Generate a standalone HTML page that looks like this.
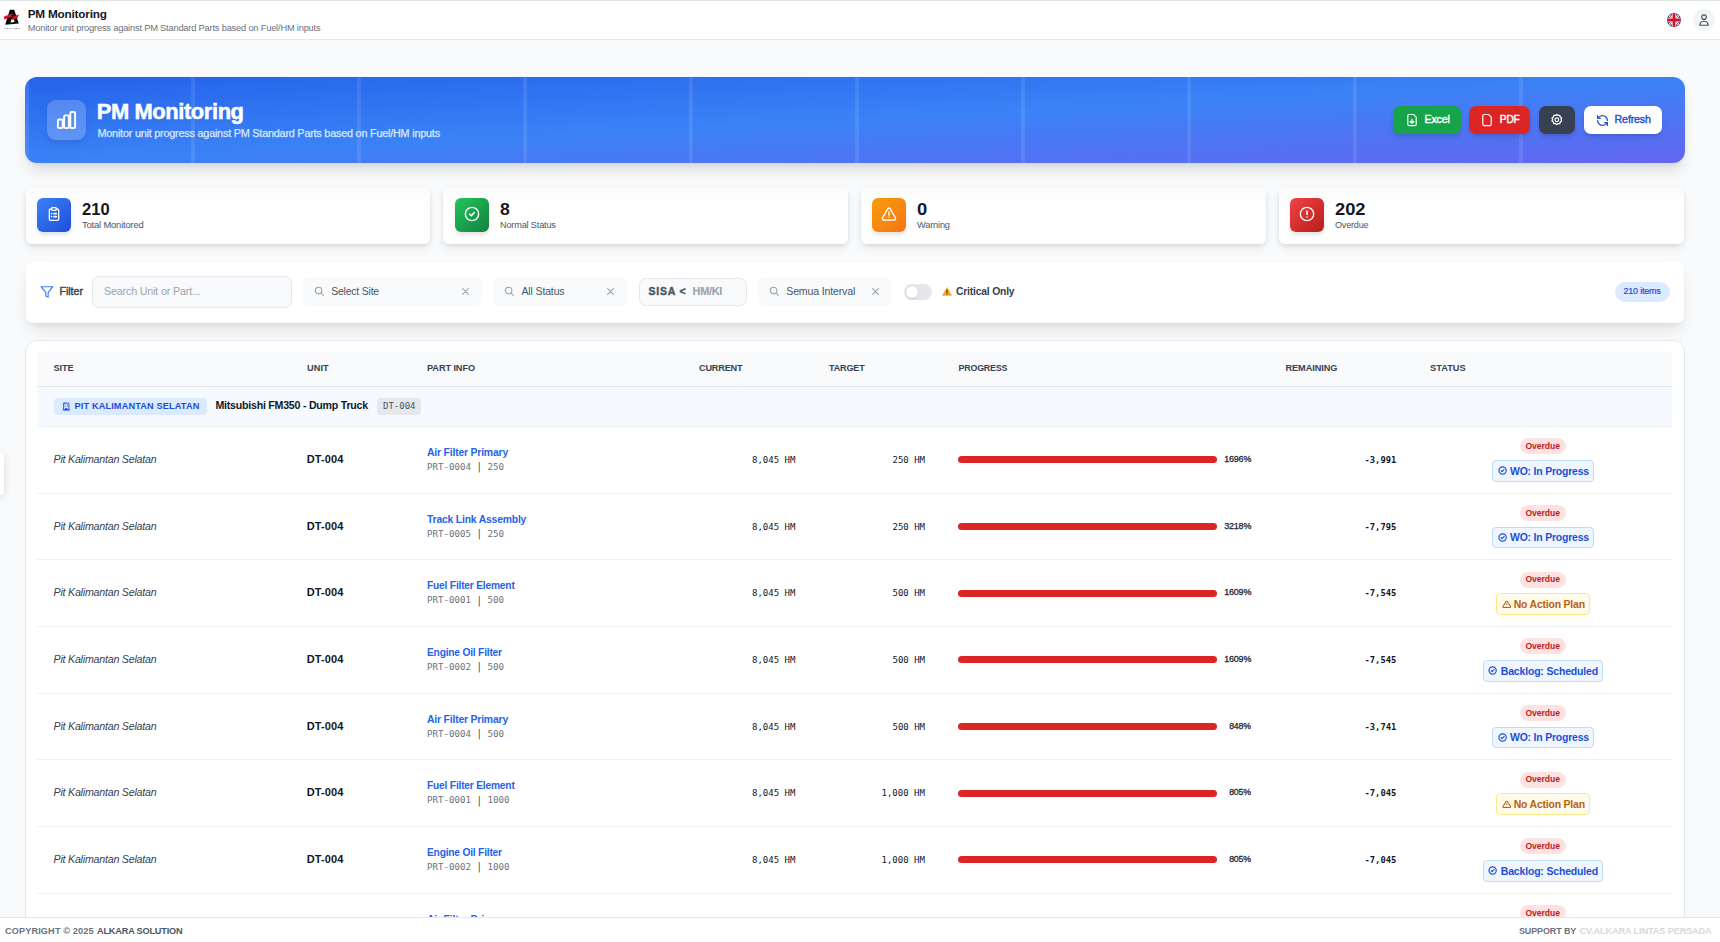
<!DOCTYPE html>
<html lang="en"><head><meta charset="utf-8"><title>PM Monitoring</title>
<style>
html,body{margin:0;padding:0}
body{width:1720px;height:942px;overflow:hidden;position:relative;background:#f9fafb;font-family:"Liberation Sans", sans-serif;}
.b{position:absolute;display:block;box-sizing:border-box}
.t{position:absolute;white-space:pre;display:block}
</style></head><body>
<div class="b" style="left:0px;top:0px;width:1720px;height:40px;background:#fff;border-bottom:1px solid #e5e7eb;"></div>
<div class="b" style="left:0px;top:0px;width:1720px;height:1px;background:#dde8e3;"></div>
<svg class="b" style="left:3px;top:8px" width="19" height="23" viewBox="0 0 19 23">
<polygon points="6.8,1.8 11.2,1.8 15.8,15.6 2.2,16.8" fill="#0a0a0a"/>
<polygon points="8.6,11.300 10.6,11.100 11.700,14.000 7.400,14.400" fill="#fff"/>
<polygon points="1.2,8.500 9.6,5.300 8.8,8.800 1.0,11.500" fill="#d90d1e"/>
<polygon points="9.6,9.0 15.9,6.200 14.6,9.800 8.9,12.0" fill="#d90d1e"/>
<text x="1.1" y="20.700" font-family="Liberation Sans, sans-serif" font-size="2.500" font-weight="700" letter-spacing="1.050" fill="#000">ALKARA</text>
</svg>
<span class="t" style="top:8px;font:700 11.76px/1 'Liberation Sans', sans-serif;color:#111827;letter-spacing:-0.200px;left:27.70px;">PM Monitoring</span>
<span class="t" style="top:24px;font:400 9.29px/1 'Liberation Sans', sans-serif;color:#6b7280;letter-spacing:-0.193px;left:27.70px;">Monitor unit progress against PM Standard Parts based on Fuel/HM inputs</span>
<svg class="b" style="left:1667px;top:13px" width="14" height="14" viewBox="0 0 14 14">
<defs><clipPath id="fc"><circle cx="7" cy="7" r="7"/></clipPath></defs>
<g clip-path="url(#fc)"><rect width="14" height="14" fill="#15286e"/>
<path d="M0 0L14 14M14 0L0 14" stroke="#fff" stroke-width="2.2"/>
<path d="M0 0L14 14M14 0L0 14" stroke="#d0122d" stroke-width=".8"/>
<path d="M7 0V14M0 7H14" stroke="#fff" stroke-width="4.6"/>
<path d="M7 0V14M0 7H14" stroke="#d0122d" stroke-width="2.8"/></g></svg>
<div class="b" style="left:1693px;top:9px;width:22px;height:22px;border-radius:50%;background:#f3f4f6;"></div>
<svg class="b" style="left:1698px;top:14px" width="12" height="12" viewBox="0 0 24 24" fill="none" stroke="#4b5563" stroke-width="2.4" stroke-linecap="round" stroke-linejoin="round"><circle cx="12" cy="6.200" r="4.600"/><path d="M3.500 22.500c.6-5.200 3.600-8 8.500-8s7.900 2.800 8.500 8z"/></svg>
<div class="b" style="left:25px;top:77px;width:1660px;height:86px;border-radius:12px;background:linear-gradient(90deg,rgba(255,255,255,.095),rgba(255,255,255,.095)) 0px 0/4px 100% no-repeat,linear-gradient(90deg,rgba(255,255,255,.095),rgba(255,255,255,.095)) 166px 0/4px 100% no-repeat,linear-gradient(90deg,rgba(255,255,255,.095),rgba(255,255,255,.095)) 332px 0/4px 100% no-repeat,linear-gradient(90deg,rgba(255,255,255,.095),rgba(255,255,255,.095)) 498px 0/4px 100% no-repeat,linear-gradient(90deg,rgba(255,255,255,.095),rgba(255,255,255,.095)) 664px 0/4px 100% no-repeat,linear-gradient(90deg,rgba(255,255,255,.095),rgba(255,255,255,.095)) 830px 0/4px 100% no-repeat,linear-gradient(90deg,rgba(255,255,255,.095),rgba(255,255,255,.095)) 996px 0/4px 100% no-repeat,linear-gradient(90deg,rgba(255,255,255,.095),rgba(255,255,255,.095)) 1162px 0/4px 100% no-repeat,linear-gradient(90deg,rgba(255,255,255,.095),rgba(255,255,255,.095)) 1328px 0/4px 100% no-repeat,linear-gradient(90deg,rgba(255,255,255,.095),rgba(255,255,255,.095)) 1494px 0/4px 100% no-repeat,linear-gradient(to bottom right,#2563eb,#3b82f6,#6366f1);box-shadow:0 10px 15px -3px rgba(0,0,0,.12),0 4px 6px -4px rgba(0,0,0,.1);overflow:hidden;"></div>
<div class="b" style="left:47px;top:100px;width:38.6px;height:40px;border-radius:9px;background:rgba(255,255,255,.2);box-shadow:0 4px 6px -1px rgba(0,0,0,.1);"></div>
<svg class="b" style="left:50px;top:105px" width="34" height="30" viewBox="0 0 34 30" fill="none" stroke="#fff" stroke-width="1.9" stroke-linejoin="round"><rect x="7.9" y="14.45" width="4.8" height="8.6" rx="1.3"/><rect x="14.1" y="10.35" width="4.8" height="12.7" rx="1.3"/><rect x="20.3" y="6.95" width="4.8" height="16.1" rx="1.3"/></svg>
<span class="t" style="top:101px;font:700 21.9px/1 'Liberation Sans', sans-serif;color:#fff;letter-spacing:-0.400px;left:96.80px;-webkit-text-stroke:.5px #fff;">PM Monitoring</span>
<span class="t" style="top:128px;font:400 10.85px/1 'Liberation Sans', sans-serif;color:#dbeafe;letter-spacing:-0.221px;left:97.50px;-webkit-text-stroke:.25px #dbeafe;">Monitor unit progress against PM Standard Parts based on Fuel/HM inputs</span>
<div class="b" style="left:1393px;top:106px;width:68px;height:28px;border-radius:7px;background:#16a34a;box-shadow:0 4px 6px -1px rgba(0,0,0,.12),0 2px 4px -2px rgba(0,0,0,.1);"></div>
<svg class="b" style="left:1405px;top:113px" width="14" height="14" viewBox="0 0 24 24" fill="none" stroke="#fff" stroke-width="2" stroke-linecap="round" stroke-linejoin="round"><path d="M14.500 2.500H7a2.200 2.200 0 0 0-2.200 2.200v14.600A2.200 2.200 0 0 0 7 21.500h10a2.200 2.200 0 0 0 2.200-2.200V7.200z"/><path d="M12 11v6.500M8.800 14.500l3.200 3.200 3.200-3.200" stroke-width="2.400"/></svg>
<span class="t" style="top:114px;font:400 10.7px/1 'Liberation Sans', sans-serif;color:#fff;letter-spacing:-0.175px;left:1424.50px;-webkit-text-stroke:.42px #fff;">Excel</span>
<div class="b" style="left:1469px;top:106px;width:61px;height:28px;border-radius:7px;background:#dc2626;box-shadow:0 4px 6px -1px rgba(0,0,0,.12),0 2px 4px -2px rgba(0,0,0,.1);"></div>
<svg class="b" style="left:1480px;top:113px" width="14" height="14" viewBox="0 0 24 24" fill="none" stroke="#fff" stroke-width="2" stroke-linecap="round" stroke-linejoin="round"><path d="M14.500 2.500H7a2.200 2.200 0 0 0-2.200 2.200v14.600A2.200 2.200 0 0 0 7 21.500h10a2.200 2.200 0 0 0 2.200-2.200V7.200z"/></svg>
<span class="t" style="top:115px;font:400 10.1px/1 'Liberation Sans', sans-serif;color:#fff;letter-spacing:-0.150px;left:1499.80px;-webkit-text-stroke:.42px #fff;">PDF</span>
<div class="b" style="left:1539px;top:106px;width:36px;height:28px;border-radius:7px;background:#374151;box-shadow:0 4px 6px -1px rgba(0,0,0,.12),0 2px 4px -2px rgba(0,0,0,.1);"></div>
<svg class="b" style="left:1550.200px;top:113.200px" width="13.600" height="13.600" viewBox="0 0 24 24" fill="none" stroke="#fff" stroke-width="2.200" stroke-linecap="round" stroke-linejoin="round"><path d="M12 2.500l2.300 1.900 3-.2.700 2.900 2.500 1.600-1.100 2.800 1.100 2.800-2.500 1.600-.7 2.900-3-.2-2.300 1.900-2.300-1.900-3 .2-.7-2.900L3.500 14.300l1.100-2.800L3.500 8.700 6 7.100l.7-2.900 3 .2z"/><circle cx="12" cy="12" r="3.200"/></svg>
<div class="b" style="left:1584px;top:106px;width:78px;height:28px;border-radius:7px;background:#fff;box-shadow:0 4px 6px -1px rgba(0,0,0,.12),0 2px 4px -2px rgba(0,0,0,.1);"></div>
<svg class="b" style="left:1595.500px;top:113.500px" width="13" height="13" viewBox="0 0 24 24" fill="none" stroke="#1d4ed8" stroke-width="2.300" stroke-linecap="round" stroke-linejoin="round"><path d="M21 12a9 9 0 0 0-9-9 9.750 9.750 0 0 0-6.740 2.740L3 8"/><path d="M3 3v5h5"/><path d="M3 12a9 9 0 0 0 9 9 9.750 9.750 0 0 0 6.740-2.740L21 16"/><path d="M16 16h5v5"/></svg>
<span class="t" style="top:114px;font:400 10.61px/1 'Liberation Sans', sans-serif;color:#1d4ed8;letter-spacing:-0.133px;left:1614.60px;-webkit-text-stroke:.4px #1d4ed8;">Refresh</span>
<div class="b" style="left:25.60px;top:187px;width:404.50px;height:56.5px;border-radius:6px;background:linear-gradient(#fbfbfb,#fff 40%);box-shadow:0 4px 8px -1px rgba(0,0,0,.1),0 2px 5px -1px rgba(0,0,0,.07),0 0 0 .5px rgba(0,0,0,.02);"></div>
<div class="b" style="left:37px;top:198px;width:34px;height:34px;border-radius:6px;background:linear-gradient(135deg,#3b82f6,#1d4ed8);box-shadow:0 3px 5px -1px rgba(0,0,0,.15);"></div>
<svg class="b" style="left:46px;top:206.4px" width="16" height="16" viewBox="0 0 24 24" fill="none" stroke="#fff" stroke-width="2" stroke-linecap="round" stroke-linejoin="round"><rect x="8.500" y="2.500" width="7" height="4" rx="1.200"/><path d="M15.500 4.500H17a2 2 0 0 1 2 2v13a2 2 0 0 1-2 2H7a2 2 0 0 1-2-2v-13a2 2 0 0 1 2-2h1.500"/><path d="M12 11.500h3.500M12 16h3.500M8.500 11.500h.01M8.500 16h.01" stroke-width="2.400"/></svg>
<span class="t" style="top:202px;font:700 16.54px/1 'Liberation Sans', sans-serif;color:#111827;left:82.00px;transform:scaleX(1.000);transform-origin:0px 50%;">210</span>
<span class="t" style="top:220px;font:400 9.45px/1 'Liberation Sans', sans-serif;color:#4b5563;letter-spacing:-0.196px;left:82.00px;">Total Monitored</span>
<div class="b" style="left:442.60px;top:187px;width:405.40px;height:56.5px;border-radius:6px;background:linear-gradient(#fbfbfb,#fff 40%);box-shadow:0 4px 8px -1px rgba(0,0,0,.1),0 2px 5px -1px rgba(0,0,0,.07),0 0 0 .5px rgba(0,0,0,.02);"></div>
<div class="b" style="left:455px;top:198px;width:34px;height:34px;border-radius:6px;background:linear-gradient(135deg,#22c55e,#15803d);box-shadow:0 3px 5px -1px rgba(0,0,0,.15);"></div>
<svg class="b" style="left:464px;top:206.4px" width="16" height="16" viewBox="0 0 24 24" fill="none" stroke="#fff" stroke-width="2" stroke-linecap="round" stroke-linejoin="round"><circle cx="12" cy="12" r="10"/><path d="m8.500 12.300 2.400 2.400 4.600-4.900" stroke-width="2.400"/></svg>
<span class="t" style="top:202px;font:700 16.54px/1 'Liberation Sans', sans-serif;color:#111827;left:500.00px;transform:scaleX(1.067);transform-origin:0px 50%;">8</span>
<span class="t" style="top:221px;font:400 9.12px/1 'Liberation Sans', sans-serif;color:#4b5563;letter-spacing:-0.150px;left:500.00px;">Normal Status</span>
<div class="b" style="left:861.00px;top:187px;width:405.00px;height:56.5px;border-radius:6px;background:linear-gradient(#fbfbfb,#fff 40%);box-shadow:0 4px 8px -1px rgba(0,0,0,.1),0 2px 5px -1px rgba(0,0,0,.07),0 0 0 .5px rgba(0,0,0,.02);"></div>
<div class="b" style="left:872px;top:198px;width:34px;height:34px;border-radius:6px;background:linear-gradient(135deg,#f59e0b,#f97316);box-shadow:0 3px 5px -1px rgba(0,0,0,.15);"></div>
<svg class="b" style="left:881px;top:206.4px" width="16" height="16" viewBox="0 0 24 24" fill="none" stroke="#fff" stroke-width="2" stroke-linecap="round" stroke-linejoin="round"><path d="m21.700 18-8-14a2 2 0 0 0-3.500 0l-8 14A2 2 0 0 0 4 21h16a2 2 0 0 0 1.700-3"/><path d="M12 9v4.500M12 17h.01" stroke-width="2.300"/></svg>
<span class="t" style="top:202px;font:700 16.54px/1 'Liberation Sans', sans-serif;color:#111827;left:917.00px;transform:scaleX(1.111);transform-origin:0px 50%;">0</span>
<span class="t" style="top:221px;font:400 9.22px/1 'Liberation Sans', sans-serif;color:#4b5563;letter-spacing:-0.167px;left:917.00px;">Warning</span>
<div class="b" style="left:1279.00px;top:187px;width:405.40px;height:56.5px;border-radius:6px;background:linear-gradient(#fbfbfb,#fff 40%);box-shadow:0 4px 8px -1px rgba(0,0,0,.1),0 2px 5px -1px rgba(0,0,0,.07),0 0 0 .5px rgba(0,0,0,.02);"></div>
<div class="b" style="left:1290px;top:198px;width:34px;height:34px;border-radius:6px;background:linear-gradient(135deg,#ef4444,#b91c1c);box-shadow:0 3px 5px -1px rgba(0,0,0,.15);"></div>
<svg class="b" style="left:1299px;top:206.4px" width="16" height="16" viewBox="0 0 24 24" fill="none" stroke="#fff" stroke-width="2" stroke-linecap="round" stroke-linejoin="round"><circle cx="12" cy="12" r="10"/><path d="M12 7.500v5M12 16.500h.01" stroke-width="2.400"/></svg>
<span class="t" style="top:202px;font:700 16.54px/1 'Liberation Sans', sans-serif;color:#111827;left:1335.00px;transform:scaleX(1.107);transform-origin:0px 50%;">202</span>
<span class="t" style="top:221px;font:400 8.99px/1 'Liberation Sans', sans-serif;color:#4b5563;letter-spacing:-0.167px;left:1335.00px;">Overdue</span>
<div class="b" style="left:25.6px;top:262px;width:1658.8px;height:60.5px;border-radius:7px;background:#fff;box-shadow:0 10px 18px -4px rgba(0,0,0,.10),0 4px 7px -3px rgba(0,0,0,.08);"></div>
<svg class="b" style="left:40.200px;top:285.200px" width="14" height="14" viewBox="0 0 24 24" fill="none" stroke="#3b82f6" stroke-width="2" stroke-linecap="round" stroke-linejoin="round"><path d="M22 3H2l8 9.460V19l4 2v-8.540z"/></svg>
<span class="t" style="top:286px;font:400 10.76px/1 'Liberation Sans', sans-serif;color:#374151;letter-spacing:-0.080px;left:59.50px;-webkit-text-stroke:.4px #374151;">Filter</span>
<div class="b" style="left:92px;top:276px;width:200px;height:31.5px;border-radius:7px;background:#f9fafb;border:1px solid #e5e7eb;"></div>
<span class="t" style="top:286px;font:400 10.78px/1 'Liberation Sans', sans-serif;color:#9ca3af;letter-spacing:-0.190px;left:104.00px;">Search Unit or Part...</span>
<div class="b" style="left:303px;top:277.2px;width:179px;height:29.2px;border-radius:7px;background:#f9fafb;"></div>
<svg class="b" style="left:313.5px;top:285.800px" width="10.500" height="10.500" viewBox="0 0 24 24" fill="none" stroke="#9ca3af" stroke-width="2.400" stroke-linecap="round"><circle cx="10.500" cy="10.500" r="7.500"/><path d="m21.500 21.500-5.400-5.400"/></svg>
<span class="t" style="top:287px;font:400 10.45px/1 'Liberation Sans', sans-serif;color:#4b5563;letter-spacing:-0.200px;left:331.25px;">Select Site</span>
<svg class="b" style="left:462.3px;top:288px" width="7" height="7" viewBox="0 0 7 7" stroke="#9ca3af" stroke-width="1.100" stroke-linecap="round"><path d="M.6.6l5.800 5.800M6.400.6L.6 6.400"/></svg>
<div class="b" style="left:493px;top:277.2px;width:135px;height:29.2px;border-radius:7px;background:#f9fafb;"></div>
<svg class="b" style="left:503.5px;top:285.800px" width="10.500" height="10.500" viewBox="0 0 24 24" fill="none" stroke="#9ca3af" stroke-width="2.400" stroke-linecap="round"><circle cx="10.500" cy="10.500" r="7.500"/><path d="m21.500 21.500-5.400-5.400"/></svg>
<span class="t" style="top:286px;font:400 10.5px/1 'Liberation Sans', sans-serif;color:#4b5563;letter-spacing:-0.139px;left:521.50px;">All Status</span>
<svg class="b" style="left:607.3px;top:288px" width="7" height="7" viewBox="0 0 7 7" stroke="#9ca3af" stroke-width="1.100" stroke-linecap="round"><path d="M.6.6l5.800 5.800M6.400.6L.6 6.400"/></svg>
<div class="b" style="left:639px;top:278.25px;width:107.75px;height:27.25px;border-radius:7px;background:#f9fafb;border:1px solid #e5e7eb;"></div>
<span class="t" style="top:286px;font:700 10.5px/1 'Liberation Sans', sans-serif;color:#4b5563;letter-spacing:0.800px;left:648.50px;-webkit-text-stroke:.4px #4b5563;">SISA &lt;</span>
<span class="t" style="top:286px;font:700 10.91px/1 'Liberation Sans', sans-serif;color:#9ca3af;letter-spacing:-0.250px;left:692.50px;-webkit-text-stroke:.15px #9ca3af;">HM/KI</span>
<div class="b" style="left:758px;top:277.2px;width:134px;height:29.2px;border-radius:7px;background:#f9fafb;"></div>
<svg class="b" style="left:768.7px;top:285.800px" width="10.500" height="10.500" viewBox="0 0 24 24" fill="none" stroke="#9ca3af" stroke-width="2.400" stroke-linecap="round"><circle cx="10.500" cy="10.500" r="7.500"/><path d="m21.500 21.500-5.400-5.400"/></svg>
<span class="t" style="top:286px;font:400 10.6px/1 'Liberation Sans', sans-serif;color:#4b5563;letter-spacing:-0.173px;left:786.25px;">Semua Interval</span>
<svg class="b" style="left:872.3px;top:288px" width="7" height="7" viewBox="0 0 7 7" stroke="#9ca3af" stroke-width="1.100" stroke-linecap="round"><path d="M.6.6l5.800 5.800M6.400.6L.6 6.400"/></svg>
<div class="b" style="left:904px;top:284px;width:28px;height:15.75px;border-radius:8px;background:#e5e7eb;"></div>
<div class="b" style="left:905.75px;top:285.6px;width:12.5px;height:12.5px;border-radius:50%;background:#fff;box-shadow:0 0 0 .6px #d1d5db,0 1px 2px rgba(0,0,0,.15);"></div>
<svg class="b" style="left:941.500px;top:287.300px" width="10" height="9" viewBox="0 0 11 10"><path d="M5.500.700 10.400 9.200H.6z" fill="#f7a823" stroke="#f7a823" stroke-width=".9" stroke-linejoin="round"/><path d="M5.500 3.300v3.200" stroke="#3b2a10" stroke-width="1.100" stroke-linecap="round"/><circle cx="5.500" cy="8" r=".65" fill="#3b2a10"/></svg>
<span class="t" style="top:287px;font:700 10.38px/1 'Liberation Sans', sans-serif;color:#374151;letter-spacing:-0.208px;left:956.00px;">Critical Only</span>
<div class="b" style="left:1615px;top:282px;width:55px;height:19.5px;border-radius:10px;background:#dbeafe;"></div><span class="t" style="top:287px;font:400 8.95px/1 'Liberation Sans', sans-serif;color:#1d4ed8;letter-spacing:-0.188px;left:1623.50px;-webkit-text-stroke:.2px #1d4ed8;">210 items</span>
<div class="b" style="left:25px;top:340px;width:1660px;height:620px;border-radius:12px;background:#fff;border:1px solid #e2e8f0;box-shadow:0 1px 2px rgba(0,0,0,.04);box-sizing:border-box;"></div>
<div class="b" style="left:37px;top:352px;width:1635px;height:35px;background:#f8fafc;border-bottom:1px solid #e3e6eb;"></div>
<span class="t" style="top:364px;font:700 9.19px/1 'Liberation Sans', sans-serif;color:#374151;letter-spacing:-0.067px;left:53.50px;">SITE</span>
<span class="t" style="top:364px;font:700 9.19px/1 'Liberation Sans', sans-serif;color:#374151;letter-spacing:0.100px;left:307.00px;">UNIT</span>
<span class="t" style="top:364px;font:700 9.19px/1 'Liberation Sans', sans-serif;color:#374151;letter-spacing:-0.088px;left:427.00px;">PART INFO</span>
<span class="t" style="top:364px;font:700 9.19px/1 'Liberation Sans', sans-serif;color:#374151;letter-spacing:-0.200px;left:699.00px;">CURRENT</span>
<span class="t" style="top:364px;font:700 9.0px/1 'Liberation Sans', sans-serif;color:#374151;letter-spacing:-0.140px;left:829.00px;">TARGET</span>
<span class="t" style="top:364px;font:700 8.85px/1 'Liberation Sans', sans-serif;color:#374151;letter-spacing:-0.171px;left:958.50px;">PROGRESS</span>
<span class="t" style="top:364px;font:700 9.19px/1 'Liberation Sans', sans-serif;color:#374151;letter-spacing:-0.062px;left:1285.50px;">REMAINING</span>
<span class="t" style="top:364px;font:700 9.19px/1 'Liberation Sans', sans-serif;color:#374151;letter-spacing:0.060px;left:1430.00px;">STATUS</span>
<div class="b" style="left:37px;top:387px;width:1635px;height:40px;background:#f6f9fe;border-bottom:1px solid #eff2f7;"></div>
<div class="b" style="left:54px;top:398px;width:152.5px;height:16.5px;border-radius:4px;background:#dbeafe;"></div>
<svg class="b" style="left:61.500px;top:402px" width="8.500" height="9" viewBox="0 0 24 24" fill="none" stroke="#1d4ed8" stroke-width="2.600" stroke-linecap="round" stroke-linejoin="round"><rect x="4.500" y="2.500" width="15" height="19" rx="1.500"/><path d="M9.500 21.500v-4h5v4M9 7h.01M15 7h.01M9 11.500h.01M15 11.500h.01M2.500 21.500h19"/></svg>
<span class="t" style="top:402px;font:700 9.19px/1 'Liberation Sans', sans-serif;color:#1d4ed8;letter-spacing:0.143px;left:74.50px;">PIT KALIMANTAN SELATAN</span>
<span class="t" style="top:400px;font:700 10.61px/1 'Liberation Sans', sans-serif;color:#111827;letter-spacing:-0.232px;left:215.50px;">Mitsubishi FM350 - Dump Truck</span>
<div class="b" style="left:377px;top:398px;width:43.75px;height:17px;border-radius:4px;background:#e5e7eb;"></div>
<span class="t" style="top:402px;font:400 9px/1 'DejaVu Sans Mono', 'Liberation Mono', monospace;color:#4b5563;left:383.00px;">DT-004</span>
<span class="t" style="top:454px;font:italic 400 10.65px/1 'Liberation Sans', sans-serif;color:#374151;letter-spacing:-0.214px;left:53.50px;">Pit Kalimantan Selatan</span>
<span class="t" style="top:454px;font:700 11.03px/1 'Liberation Sans', sans-serif;color:#111827;letter-spacing:0.100px;left:306.75px;">DT-004</span>
<span class="t" style="top:448px;font:700 10.45px/1 'Liberation Sans', sans-serif;color:#2563eb;letter-spacing:-0.206px;left:427.00px;">Air Filter Primary</span>
<span class="t" style="top:463px;font:400 9.13px/1 'DejaVu Sans Mono', 'Liberation Mono', monospace;color:#6b7280;left:427.00px;">PRT-0004</span>
<span class="t" style="top:462px;font:400 10px/1 'DejaVu Sans Mono', 'Liberation Mono', monospace;color:#4b5563;left:476.20px;">|</span>
<span class="t" style="top:463px;font:400 9.13px/1 'DejaVu Sans Mono', 'Liberation Mono', monospace;color:#6b7280;left:487.50px;">250</span>
<span class="t" style="top:456px;font:400 9px/1 'DejaVu Sans Mono', 'Liberation Mono', monospace;color:#111827;left:752.00px;">8,045 HM</span>
<span class="t" style="top:456px;font:400 9px/1 'DejaVu Sans Mono', 'Liberation Mono', monospace;color:#111827;left:892.50px;">250 HM</span>
<div class="b" style="left:958px;top:456px;width:259px;height:7px;border-radius:4px;background:#dc2626;"></div>
<span class="t" style="top:455px;font:400 8.92px/1 'Liberation Sans', sans-serif;color:#1f2937;letter-spacing:-0.150px;left:1224.20px;-webkit-text-stroke:.3px #1f2937;">1696%</span>
<span class="t" style="top:456px;font:700 8.8px/1 'DejaVu Sans Mono', 'Liberation Mono', monospace;color:#111827;left:1364.50px;">-3,991</span>
<div class="b" style="left:1520px;top:438px;width:46px;height:15.75px;border-radius:8px;background:#fee2e2;"></div>
<span class="t" style="top:442px;font:700 8.62px/1 'Liberation Sans', sans-serif;color:#b91c1c;letter-spacing:-0.083px;left:1525.50px;">Overdue</span>
<div class="b" style="left:1492px;top:460.10px;width:102px;height:21.45px;border-radius:4px;background:#eff6ff;border:1px solid #bfdbfe;box-sizing:border-box;"></div>
<svg class="b" style="left:1497.600px;top:466.30px" width="9.200" height="9.200" viewBox="0 0 24 24" fill="none" stroke="#1d4ed8" stroke-width="3.100" stroke-linecap="round" stroke-linejoin="round"><circle cx="12" cy="12" r="9.500"/><path d="m8.300 12.300 2.500 2.500 4.900-5.100"/></svg>
<span class="t" style="top:467px;font:700 10.45px/1 'Liberation Sans', sans-serif;color:#1d4ed8;letter-spacing:-0.193px;left:1510.00px;">WO: In Progress</span>
<div class="b" style="left:37px;top:493px;width:1635px;height:1px;background:#eff1f4;"></div>
<span class="t" style="top:521px;font:italic 400 10.65px/1 'Liberation Sans', sans-serif;color:#374151;letter-spacing:-0.214px;left:53.50px;">Pit Kalimantan Selatan</span>
<span class="t" style="top:521px;font:700 11.03px/1 'Liberation Sans', sans-serif;color:#111827;letter-spacing:0.100px;left:306.75px;">DT-004</span>
<span class="t" style="top:515px;font:700 10.38px/1 'Liberation Sans', sans-serif;color:#2563eb;letter-spacing:-0.194px;left:427.00px;">Track Link Assembly</span>
<span class="t" style="top:530px;font:400 9.13px/1 'DejaVu Sans Mono', 'Liberation Mono', monospace;color:#6b7280;left:427.00px;">PRT-0005</span>
<span class="t" style="top:529px;font:400 10px/1 'DejaVu Sans Mono', 'Liberation Mono', monospace;color:#4b5563;left:476.20px;">|</span>
<span class="t" style="top:530px;font:400 9.13px/1 'DejaVu Sans Mono', 'Liberation Mono', monospace;color:#6b7280;left:487.50px;">250</span>
<span class="t" style="top:523px;font:400 9px/1 'DejaVu Sans Mono', 'Liberation Mono', monospace;color:#111827;left:752.00px;">8,045 HM</span>
<span class="t" style="top:523px;font:400 9px/1 'DejaVu Sans Mono', 'Liberation Mono', monospace;color:#111827;left:892.50px;">250 HM</span>
<div class="b" style="left:958px;top:523px;width:259px;height:7px;border-radius:4px;background:#dc2626;"></div>
<span class="t" style="top:522px;font:400 8.92px/1 'Liberation Sans', sans-serif;color:#1f2937;letter-spacing:-0.150px;left:1224.20px;-webkit-text-stroke:.3px #1f2937;">3218%</span>
<span class="t" style="top:523px;font:700 8.8px/1 'DejaVu Sans Mono', 'Liberation Mono', monospace;color:#111827;left:1364.50px;">-7,795</span>
<div class="b" style="left:1520px;top:505px;width:46px;height:15.75px;border-radius:8px;background:#fee2e2;"></div>
<span class="t" style="top:509px;font:700 8.62px/1 'Liberation Sans', sans-serif;color:#b91c1c;letter-spacing:-0.083px;left:1525.50px;">Overdue</span>
<div class="b" style="left:1492px;top:526.77px;width:102px;height:21.45px;border-radius:4px;background:#eff6ff;border:1px solid #bfdbfe;box-sizing:border-box;"></div>
<svg class="b" style="left:1497.600px;top:532.97px" width="9.200" height="9.200" viewBox="0 0 24 24" fill="none" stroke="#1d4ed8" stroke-width="3.100" stroke-linecap="round" stroke-linejoin="round"><circle cx="12" cy="12" r="9.500"/><path d="m8.300 12.300 2.500 2.500 4.900-5.100"/></svg>
<span class="t" style="top:533px;font:700 10.45px/1 'Liberation Sans', sans-serif;color:#1d4ed8;letter-spacing:-0.193px;left:1510.00px;">WO: In Progress</span>
<div class="b" style="left:37px;top:559px;width:1635px;height:1px;background:#eff1f4;"></div>
<span class="t" style="top:587px;font:italic 400 10.65px/1 'Liberation Sans', sans-serif;color:#374151;letter-spacing:-0.214px;left:53.50px;">Pit Kalimantan Selatan</span>
<span class="t" style="top:587px;font:700 11.03px/1 'Liberation Sans', sans-serif;color:#111827;letter-spacing:0.100px;left:306.75px;">DT-004</span>
<span class="t" style="top:581px;font:700 10.21px/1 'Liberation Sans', sans-serif;color:#2563eb;letter-spacing:-0.194px;left:427.00px;">Fuel Filter Element</span>
<span class="t" style="top:596px;font:400 9.13px/1 'DejaVu Sans Mono', 'Liberation Mono', monospace;color:#6b7280;left:427.00px;">PRT-0001</span>
<span class="t" style="top:596px;font:400 10px/1 'DejaVu Sans Mono', 'Liberation Mono', monospace;color:#4b5563;left:476.20px;">|</span>
<span class="t" style="top:596px;font:400 9.13px/1 'DejaVu Sans Mono', 'Liberation Mono', monospace;color:#6b7280;left:487.50px;">500</span>
<span class="t" style="top:589px;font:400 9px/1 'DejaVu Sans Mono', 'Liberation Mono', monospace;color:#111827;left:752.00px;">8,045 HM</span>
<span class="t" style="top:589px;font:400 9px/1 'DejaVu Sans Mono', 'Liberation Mono', monospace;color:#111827;left:892.50px;">500 HM</span>
<div class="b" style="left:958px;top:590px;width:259px;height:7px;border-radius:4px;background:#dc2626;"></div>
<span class="t" style="top:588px;font:400 8.92px/1 'Liberation Sans', sans-serif;color:#1f2937;letter-spacing:-0.150px;left:1224.20px;-webkit-text-stroke:.3px #1f2937;">1609%</span>
<span class="t" style="top:589px;font:700 8.8px/1 'DejaVu Sans Mono', 'Liberation Mono', monospace;color:#111827;left:1364.50px;">-7,545</span>
<div class="b" style="left:1520px;top:572px;width:46px;height:15.75px;border-radius:8px;background:#fee2e2;"></div>
<span class="t" style="top:575px;font:700 8.62px/1 'Liberation Sans', sans-serif;color:#b91c1c;letter-spacing:-0.083px;left:1525.50px;">Overdue</span>
<div class="b" style="left:1496px;top:593.43px;width:94px;height:21.45px;border-radius:4px;background:#fffbeb;border:1px solid #fde68a;box-sizing:border-box;"></div>
<svg class="b" style="left:1501.500px;top:599.73px" width="9.500" height="8.600" preserveAspectRatio="none" viewBox="0 0 24 24" fill="none" stroke="#bb5f12" stroke-width="2.600" stroke-linecap="round" stroke-linejoin="round"><path d="m21.500 18-7.800-13.700a2 2 0 0 0-3.400 0L2.500 18a2 2 0 0 0 1.700 3h15.600a2 2 0 0 0 1.700-3"/><path d="M12 9.500v4M12 17.200h.01"/></svg>
<span class="t" style="top:600px;font:700 10.48px/1 'Liberation Sans', sans-serif;color:#bb5f12;letter-spacing:-0.212px;left:1513.75px;">No Action Plan</span>
<div class="b" style="left:37px;top:626px;width:1635px;height:1px;background:#eff1f4;"></div>
<span class="t" style="top:654px;font:italic 400 10.65px/1 'Liberation Sans', sans-serif;color:#374151;letter-spacing:-0.214px;left:53.50px;">Pit Kalimantan Selatan</span>
<span class="t" style="top:654px;font:700 11.03px/1 'Liberation Sans', sans-serif;color:#111827;letter-spacing:0.100px;left:306.75px;">DT-004</span>
<span class="t" style="top:648px;font:700 10.26px/1 'Liberation Sans', sans-serif;color:#2563eb;letter-spacing:-0.219px;left:427.00px;">Engine Oil Filter</span>
<span class="t" style="top:663px;font:400 9.13px/1 'DejaVu Sans Mono', 'Liberation Mono', monospace;color:#6b7280;left:427.00px;">PRT-0002</span>
<span class="t" style="top:662px;font:400 10px/1 'DejaVu Sans Mono', 'Liberation Mono', monospace;color:#4b5563;left:476.20px;">|</span>
<span class="t" style="top:663px;font:400 9.13px/1 'DejaVu Sans Mono', 'Liberation Mono', monospace;color:#6b7280;left:487.50px;">500</span>
<span class="t" style="top:656px;font:400 9px/1 'DejaVu Sans Mono', 'Liberation Mono', monospace;color:#111827;left:752.00px;">8,045 HM</span>
<span class="t" style="top:656px;font:400 9px/1 'DejaVu Sans Mono', 'Liberation Mono', monospace;color:#111827;left:892.50px;">500 HM</span>
<div class="b" style="left:958px;top:656px;width:259px;height:7px;border-radius:4px;background:#dc2626;"></div>
<span class="t" style="top:655px;font:400 8.92px/1 'Liberation Sans', sans-serif;color:#1f2937;letter-spacing:-0.150px;left:1224.20px;-webkit-text-stroke:.3px #1f2937;">1609%</span>
<span class="t" style="top:656px;font:700 8.8px/1 'DejaVu Sans Mono', 'Liberation Mono', monospace;color:#111827;left:1364.50px;">-7,545</span>
<div class="b" style="left:1520px;top:638px;width:46px;height:15.75px;border-radius:8px;background:#fee2e2;"></div>
<span class="t" style="top:642px;font:700 8.62px/1 'Liberation Sans', sans-serif;color:#b91c1c;letter-spacing:-0.083px;left:1525.50px;">Overdue</span>
<div class="b" style="left:1483.25px;top:660.10px;width:119.5px;height:21.45px;border-radius:4px;background:#eff6ff;border:1px solid #bfdbfe;box-sizing:border-box;"></div>
<svg class="b" style="left:1488.400px;top:666.30px" width="9.200" height="9.200" viewBox="0 0 24 24" fill="none" stroke="#1d4ed8" stroke-width="3.100" stroke-linecap="round" stroke-linejoin="round"><circle cx="12" cy="12" r="9.500"/><path d="m8.300 12.300 2.500 2.500 4.900-5.100"/></svg>
<span class="t" style="top:666px;font:700 10.5px/1 'Liberation Sans', sans-serif;color:#1d4ed8;letter-spacing:-0.176px;left:1500.75px;">Backlog: Scheduled</span>
<div class="b" style="left:37px;top:693px;width:1635px;height:1px;background:#eff1f4;"></div>
<span class="t" style="top:721px;font:italic 400 10.65px/1 'Liberation Sans', sans-serif;color:#374151;letter-spacing:-0.214px;left:53.50px;">Pit Kalimantan Selatan</span>
<span class="t" style="top:721px;font:700 11.03px/1 'Liberation Sans', sans-serif;color:#111827;letter-spacing:0.100px;left:306.75px;">DT-004</span>
<span class="t" style="top:715px;font:700 10.45px/1 'Liberation Sans', sans-serif;color:#2563eb;letter-spacing:-0.206px;left:427.00px;">Air Filter Primary</span>
<span class="t" style="top:730px;font:400 9.13px/1 'DejaVu Sans Mono', 'Liberation Mono', monospace;color:#6b7280;left:427.00px;">PRT-0004</span>
<span class="t" style="top:729px;font:400 10px/1 'DejaVu Sans Mono', 'Liberation Mono', monospace;color:#4b5563;left:476.20px;">|</span>
<span class="t" style="top:730px;font:400 9.13px/1 'DejaVu Sans Mono', 'Liberation Mono', monospace;color:#6b7280;left:487.50px;">500</span>
<span class="t" style="top:723px;font:400 9px/1 'DejaVu Sans Mono', 'Liberation Mono', monospace;color:#111827;left:752.00px;">8,045 HM</span>
<span class="t" style="top:723px;font:400 9px/1 'DejaVu Sans Mono', 'Liberation Mono', monospace;color:#111827;left:892.50px;">500 HM</span>
<div class="b" style="left:958px;top:723px;width:259px;height:7px;border-radius:4px;background:#dc2626;"></div>
<span class="t" style="top:722px;font:400 8.73px/1 'Liberation Sans', sans-serif;color:#1f2937;letter-spacing:-0.200px;left:1229.20px;-webkit-text-stroke:.3px #1f2937;">848%</span>
<span class="t" style="top:723px;font:700 8.8px/1 'DejaVu Sans Mono', 'Liberation Mono', monospace;color:#111827;left:1364.50px;">-3,741</span>
<div class="b" style="left:1520px;top:705px;width:46px;height:15.75px;border-radius:8px;background:#fee2e2;"></div>
<span class="t" style="top:709px;font:700 8.62px/1 'Liberation Sans', sans-serif;color:#b91c1c;letter-spacing:-0.083px;left:1525.50px;">Overdue</span>
<div class="b" style="left:1492px;top:726.77px;width:102px;height:21.45px;border-radius:4px;background:#eff6ff;border:1px solid #bfdbfe;box-sizing:border-box;"></div>
<svg class="b" style="left:1497.600px;top:732.97px" width="9.200" height="9.200" viewBox="0 0 24 24" fill="none" stroke="#1d4ed8" stroke-width="3.100" stroke-linecap="round" stroke-linejoin="round"><circle cx="12" cy="12" r="9.500"/><path d="m8.300 12.300 2.500 2.500 4.900-5.100"/></svg>
<span class="t" style="top:733px;font:700 10.45px/1 'Liberation Sans', sans-serif;color:#1d4ed8;letter-spacing:-0.193px;left:1510.00px;">WO: In Progress</span>
<div class="b" style="left:37px;top:759px;width:1635px;height:1px;background:#eff1f4;"></div>
<span class="t" style="top:787px;font:italic 400 10.65px/1 'Liberation Sans', sans-serif;color:#374151;letter-spacing:-0.214px;left:53.50px;">Pit Kalimantan Selatan</span>
<span class="t" style="top:787px;font:700 11.03px/1 'Liberation Sans', sans-serif;color:#111827;letter-spacing:0.100px;left:306.75px;">DT-004</span>
<span class="t" style="top:781px;font:700 10.21px/1 'Liberation Sans', sans-serif;color:#2563eb;letter-spacing:-0.194px;left:427.00px;">Fuel Filter Element</span>
<span class="t" style="top:796px;font:400 9.13px/1 'DejaVu Sans Mono', 'Liberation Mono', monospace;color:#6b7280;left:427.00px;">PRT-0001</span>
<span class="t" style="top:796px;font:400 10px/1 'DejaVu Sans Mono', 'Liberation Mono', monospace;color:#4b5563;left:476.20px;">|</span>
<span class="t" style="top:796px;font:400 9.13px/1 'DejaVu Sans Mono', 'Liberation Mono', monospace;color:#6b7280;left:487.50px;">1000</span>
<span class="t" style="top:789px;font:400 9px/1 'DejaVu Sans Mono', 'Liberation Mono', monospace;color:#111827;left:752.00px;">8,045 HM</span>
<span class="t" style="top:789px;font:400 9px/1 'DejaVu Sans Mono', 'Liberation Mono', monospace;color:#111827;left:881.50px;">1,000 HM</span>
<div class="b" style="left:958px;top:790px;width:259px;height:7px;border-radius:4px;background:#dc2626;"></div>
<span class="t" style="top:788px;font:400 8.73px/1 'Liberation Sans', sans-serif;color:#1f2937;letter-spacing:-0.200px;left:1229.20px;-webkit-text-stroke:.3px #1f2937;">805%</span>
<span class="t" style="top:789px;font:700 8.8px/1 'DejaVu Sans Mono', 'Liberation Mono', monospace;color:#111827;left:1364.50px;">-7,045</span>
<div class="b" style="left:1520px;top:772px;width:46px;height:15.75px;border-radius:8px;background:#fee2e2;"></div>
<span class="t" style="top:775px;font:700 8.62px/1 'Liberation Sans', sans-serif;color:#b91c1c;letter-spacing:-0.083px;left:1525.50px;">Overdue</span>
<div class="b" style="left:1496px;top:793.43px;width:94px;height:21.45px;border-radius:4px;background:#fffbeb;border:1px solid #fde68a;box-sizing:border-box;"></div>
<svg class="b" style="left:1501.500px;top:799.73px" width="9.500" height="8.600" preserveAspectRatio="none" viewBox="0 0 24 24" fill="none" stroke="#bb5f12" stroke-width="2.600" stroke-linecap="round" stroke-linejoin="round"><path d="m21.500 18-7.800-13.700a2 2 0 0 0-3.400 0L2.500 18a2 2 0 0 0 1.700 3h15.600a2 2 0 0 0 1.700-3"/><path d="M12 9.500v4M12 17.200h.01"/></svg>
<span class="t" style="top:800px;font:700 10.48px/1 'Liberation Sans', sans-serif;color:#bb5f12;letter-spacing:-0.212px;left:1513.75px;">No Action Plan</span>
<div class="b" style="left:37px;top:826px;width:1635px;height:1px;background:#eff1f4;"></div>
<span class="t" style="top:854px;font:italic 400 10.65px/1 'Liberation Sans', sans-serif;color:#374151;letter-spacing:-0.214px;left:53.50px;">Pit Kalimantan Selatan</span>
<span class="t" style="top:854px;font:700 11.03px/1 'Liberation Sans', sans-serif;color:#111827;letter-spacing:0.100px;left:306.75px;">DT-004</span>
<span class="t" style="top:848px;font:700 10.26px/1 'Liberation Sans', sans-serif;color:#2563eb;letter-spacing:-0.219px;left:427.00px;">Engine Oil Filter</span>
<span class="t" style="top:863px;font:400 9.13px/1 'DejaVu Sans Mono', 'Liberation Mono', monospace;color:#6b7280;left:427.00px;">PRT-0002</span>
<span class="t" style="top:862px;font:400 10px/1 'DejaVu Sans Mono', 'Liberation Mono', monospace;color:#4b5563;left:476.20px;">|</span>
<span class="t" style="top:863px;font:400 9.13px/1 'DejaVu Sans Mono', 'Liberation Mono', monospace;color:#6b7280;left:487.50px;">1000</span>
<span class="t" style="top:856px;font:400 9px/1 'DejaVu Sans Mono', 'Liberation Mono', monospace;color:#111827;left:752.00px;">8,045 HM</span>
<span class="t" style="top:856px;font:400 9px/1 'DejaVu Sans Mono', 'Liberation Mono', monospace;color:#111827;left:881.50px;">1,000 HM</span>
<div class="b" style="left:958px;top:856px;width:259px;height:7px;border-radius:4px;background:#dc2626;"></div>
<span class="t" style="top:855px;font:400 8.73px/1 'Liberation Sans', sans-serif;color:#1f2937;letter-spacing:-0.200px;left:1229.20px;-webkit-text-stroke:.3px #1f2937;">805%</span>
<span class="t" style="top:856px;font:700 8.8px/1 'DejaVu Sans Mono', 'Liberation Mono', monospace;color:#111827;left:1364.50px;">-7,045</span>
<div class="b" style="left:1520px;top:838px;width:46px;height:15.75px;border-radius:8px;background:#fee2e2;"></div>
<span class="t" style="top:842px;font:700 8.62px/1 'Liberation Sans', sans-serif;color:#b91c1c;letter-spacing:-0.083px;left:1525.50px;">Overdue</span>
<div class="b" style="left:1483.25px;top:860.10px;width:119.5px;height:21.45px;border-radius:4px;background:#eff6ff;border:1px solid #bfdbfe;box-sizing:border-box;"></div>
<svg class="b" style="left:1488.400px;top:866.30px" width="9.200" height="9.200" viewBox="0 0 24 24" fill="none" stroke="#1d4ed8" stroke-width="3.100" stroke-linecap="round" stroke-linejoin="round"><circle cx="12" cy="12" r="9.500"/><path d="m8.300 12.300 2.500 2.500 4.900-5.100"/></svg>
<span class="t" style="top:866px;font:700 10.5px/1 'Liberation Sans', sans-serif;color:#1d4ed8;letter-spacing:-0.176px;left:1500.75px;">Backlog: Scheduled</span>
<div class="b" style="left:37px;top:893px;width:1635px;height:1px;background:#eff1f4;"></div>
<span class="t" style="top:921px;font:italic 400 10.65px/1 'Liberation Sans', sans-serif;color:#374151;letter-spacing:-0.214px;left:53.50px;">Pit Kalimantan Selatan</span>
<span class="t" style="top:921px;font:700 11.03px/1 'Liberation Sans', sans-serif;color:#111827;letter-spacing:0.100px;left:306.75px;">DT-004</span>
<span class="t" style="top:915px;font:700 10.45px/1 'Liberation Sans', sans-serif;color:#2563eb;letter-spacing:-0.206px;left:427.00px;">Air Filter Primary</span>
<span class="t" style="top:930px;font:400 9.13px/1 'DejaVu Sans Mono', 'Liberation Mono', monospace;color:#6b7280;left:427.00px;">PRT-0004</span>
<span class="t" style="top:929px;font:400 10px/1 'DejaVu Sans Mono', 'Liberation Mono', monospace;color:#4b5563;left:476.20px;">|</span>
<span class="t" style="top:930px;font:400 9.13px/1 'DejaVu Sans Mono', 'Liberation Mono', monospace;color:#6b7280;left:487.50px;">1000</span>
<span class="t" style="top:923px;font:400 9px/1 'DejaVu Sans Mono', 'Liberation Mono', monospace;color:#111827;left:752.00px;">8,045 HM</span>
<span class="t" style="top:923px;font:400 9px/1 'DejaVu Sans Mono', 'Liberation Mono', monospace;color:#111827;left:881.50px;">1,000 HM</span>
<div class="b" style="left:958px;top:923px;width:259px;height:7px;border-radius:4px;background:#dc2626;"></div>
<span class="t" style="top:922px;font:400 8.73px/1 'Liberation Sans', sans-serif;color:#1f2937;letter-spacing:-0.200px;left:1229.20px;-webkit-text-stroke:.3px #1f2937;">424%</span>
<span class="t" style="top:923px;font:700 8.8px/1 'DejaVu Sans Mono', 'Liberation Mono', monospace;color:#111827;left:1364.50px;">-3,241</span>
<div class="b" style="left:1520px;top:905px;width:46px;height:15.75px;border-radius:8px;background:#fee2e2;"></div>
<span class="t" style="top:909px;font:700 8.62px/1 'Liberation Sans', sans-serif;color:#b91c1c;letter-spacing:-0.083px;left:1525.50px;">Overdue</span>
<div class="b" style="left:1492px;top:926.77px;width:102px;height:21.45px;border-radius:4px;background:#eff6ff;border:1px solid #bfdbfe;box-sizing:border-box;"></div>
<svg class="b" style="left:1497.600px;top:932.97px" width="9.200" height="9.200" viewBox="0 0 24 24" fill="none" stroke="#1d4ed8" stroke-width="3.100" stroke-linecap="round" stroke-linejoin="round"><circle cx="12" cy="12" r="9.500"/><path d="m8.300 12.300 2.500 2.500 4.900-5.100"/></svg>
<span class="t" style="top:933px;font:700 10.45px/1 'Liberation Sans', sans-serif;color:#1d4ed8;letter-spacing:-0.193px;left:1510.00px;">WO: In Progress</span>
<div class="b" style="left:-8px;top:452px;width:12px;height:42.5px;border-radius:4px;background:#fff;box-shadow:0 2px 8px rgba(0,0,0,.13);"></div>
<div class="b" style="left:0px;top:917px;width:1720px;height:25px;background:#fff;border-top:1px solid #e2e8f0;"></div>
<span class="t" style="top:927px;font:700 9.19px/1 'Liberation Sans', sans-serif;color:#6b7280;letter-spacing:0.133px;left:4.90px;">COPYRIGHT © 2025</span>
<span class="t" style="top:927px;font:700 9.19px/1 'Liberation Sans', sans-serif;color:#4b5563;letter-spacing:-0.193px;left:97.00px;">ALKARA SOLUTION</span>
<span class="t" style="top:927px;font:700 8.98px/1 'Liberation Sans', sans-serif;color:#6b7280;letter-spacing:-0.111px;left:1519.00px;">SUPPORT BY</span>
<span class="t" style="top:927px;font:700 9.19px/1 'Liberation Sans', sans-serif;color:#d5d9df;letter-spacing:-0.130px;left:1579.50px;">CV.ALKARA LINTAS PERSADA</span>
</body></html>
